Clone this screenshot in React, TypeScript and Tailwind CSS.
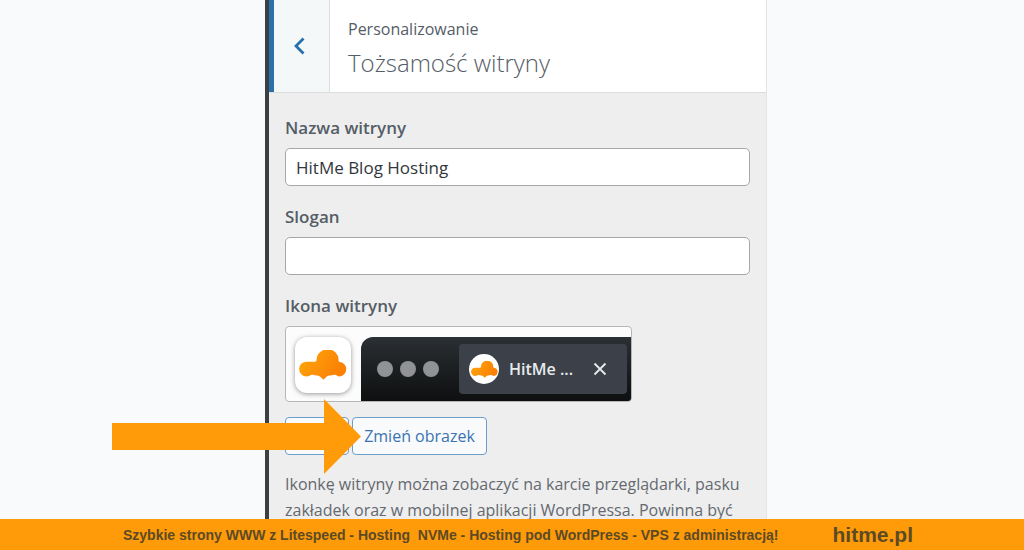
import React, { useState } from 'react';

const CloudLogo: React.FC<{ id: string; className?: string }> = ({ id, className }) => (
    <svg viewBox="0 0 48 30" className={className} aria-hidden="true">
        <defs>
            <linearGradient id={id} x1="0" y1="0" x2="1" y2="0.4">
                <stop offset="0" stopColor="#ffa80c" />
                <stop offset="1" stopColor="#fb8004" />
            </linearGradient>
        </defs>
        <path
            fill={`url(#${id})`}
            d="M7.500 11.700H15.500C17 11.700 17.600 11 17.600 9.500A11 10.500 0 0 1 39.600 10C39.600 11.500 39.800 11.700 41 12A7.300 7.300 0 0 1 40.500 26.500C38.500 26.500 37.500 25 36 24.800C34 24.500 32 25.700 30 25.600C28 25.600 26.500 28 24.500 29.800C22.500 28 20.500 25.600 18.500 25.600C16.500 25.700 15 24.500 13 24.800C11.500 25 10 26.500 7.500 26.500A7.400 7.400 0 0 1 7.500 11.700Z"
        />
    </svg>
);

const Arrow: React.FC = () => (
    <svg viewBox="0 0 249 75" className="absolute -left-[173px] -top-[18px] w-[249px] h-[75px] pointer-events-none" aria-hidden="true">
        <path fill="#ff9a08" d="M0 24H212V0L249 37.500L212 75V51H0Z" />
    </svg>
);

interface FieldProps {
    id: string;
    label: string;
    value: string;
    onChange: (value: string) => void;
}

const Field: React.FC<FieldProps> = ({ id, label, value, onChange }) => (
    <div className="mb-[19px]">
        <label htmlFor={id} className="block mb-2 text-[17px] leading-6 font-semibold text-[#555d66]">{label}</label>
        <input
            id={id}
            type="text"
            value={value}
            onChange={e => onChange(e.target.value)}
            className="block w-full h-[38px] px-[10px] rounded-[5px] border border-[#a5a7aa] bg-white text-[17px] text-[#32373c]"
        />
    </div>
);

const IconPreview: React.FC = () => (
    <div className="flex w-[347px] h-[76px] rounded-[4px] border border-[#b4b6b9] bg-[#fcfcfd] overflow-hidden">
        <div className="flex items-center justify-center w-14 h-14 mt-[10px] ml-[9px] rounded-xl bg-white shadow-[0_1px_5px_rgba(0,0,0,0.4)]">
            <CloudLogo id="app-icon" className="w-12 h-[30px]" />
        </div>
        <div className="flex flex-1 items-center mt-[10px] ml-[10px] pl-4 pr-1 rounded-tl-xl bg-linear-to-b from-[#2b3034] to-[#0e0f10]">
            <div className="flex gap-[7px]">
                <span className="size-4 rounded-full bg-[#909296]" />
                <span className="size-4 rounded-full bg-[#909296]" />
                <span className="size-4 rounded-full bg-[#909296]" />
            </div>
            <div className="flex flex-1 items-center ml-5 h-[50px] pl-[10px] pr-4 rounded-[4px] bg-[#3c4149]">
                <span className="flex items-center justify-center size-[30px] rounded-full bg-white">
                    <CloudLogo id="tab-icon" className="w-[27px] h-[17px]" />
                </span>
                <span className="ml-[10px] text-base font-semibold text-[#e8eaed]">HitMe ...</span>
                <button type="button" aria-label="Zamknij" className="ml-auto p-1 text-[#e8eaed]">
                    <svg viewBox="0 0 14 14" className="size-[14px]" fill="none" stroke="currentColor" strokeWidth="1.8">
                        <path d="M1.500 1.500L12.500 12.500M12.500 1.500L1.500 12.500" />
                    </svg>
                </button>
            </div>
        </div>
    </div>
);

export default function App() {
    const [title, setTitle] = useState('HitMe Blog Hosting');
    const [tagline, setTagline] = useState('');

    return (
        <div className="flex flex-col h-screen overflow-hidden bg-[#f9fafc] font-['Open_Sans','Noto_Sans',sans-serif]">
            <main className="flex flex-1 min-h-0 justify-center pl-2 overflow-hidden">
                <div className="w-[502px] min-h-full border-l-4 border-l-[#3b3f44] border-r border-r-[#e3e4e6] bg-[#eeeeee]">
                    <header className="flex h-[93px] border-b border-[#dddddd] bg-white">
                        <button
                            type="button"
                            aria-label="Wstecz"
                            className="flex items-center justify-center w-[61px] pr-1 border-l-5 border-l-[#2b6fab] border-r border-r-[#dddddd] bg-[#f5f8f8] text-[#2470ae]"
                        >
                            <svg viewBox="0 0 11 18" className="w-[11px] h-[18px]" fill="none" stroke="currentColor" strokeWidth="2.800">
                                <path d="M9.500 1.500L2 9L9.500 16.500" />
                            </svg>
                        </button>
                        <div className="pt-[17px] pl-[18px] text-[#555d66]">
                            <p className="text-base leading-6">Personalizowanie</p>
                            <h1 className="mt-1 text-2xl leading-9 font-light">Tożsamość witryny</h1>
                        </div>
                    </header>

                    <form className="pt-[23px] px-4" onSubmit={e => e.preventDefault()}>
                        <Field id="blogname" label="Nazwa witryny" value={title} onChange={setTitle} />
                        <Field id="blogdescription" label="Slogan" value={tagline} onChange={setTagline} />

                        <h2 className="mb-2 text-[17px] leading-6 font-semibold text-[#555d66]">Ikona witryny</h2>
                        <IconPreview />

                        <div className="relative flex gap-[3px] mt-[15px] text-base text-[#3b74b0]">
                            <button type="button" className="w-16 h-[38px] rounded-[4px] border border-[#6d9dcb] bg-[#f8fafb]">Usuń</button>
                            <button type="button" className="w-[135px] h-[38px] rounded-[4px] border border-[#6d9dcb] bg-[#f8fafb]">Zmień obrazek</button>
                            <Arrow />
                        </div>

                        <p className="mt-4 text-base leading-[26px] text-[#646970]">
                            Ikonkę witryny można zobaczyć na karcie przeglądarki, pasku zakładek oraz w mobilnej aplikacji WordPressa. Powinna być
                        </p>
                    </form>
                </div>
            </main>

            <footer className="flex shrink-0 items-center h-[31px] pl-[123px] gap-[54px] bg-[#ff9a08] font-['Liberation_Sans',Arial,sans-serif] font-bold text-[#5c4a26] whitespace-pre">
                <p className="text-sm">{'Szybkie strony WWW z Litespeed - Hosting  NVMe - Hosting pod WordPress - VPS z administracją!'}</p>
                <a href="https://hitme.pl" className="text-[21px]">hitme.pl</a>
            </footer>
        </div>
    );
}
